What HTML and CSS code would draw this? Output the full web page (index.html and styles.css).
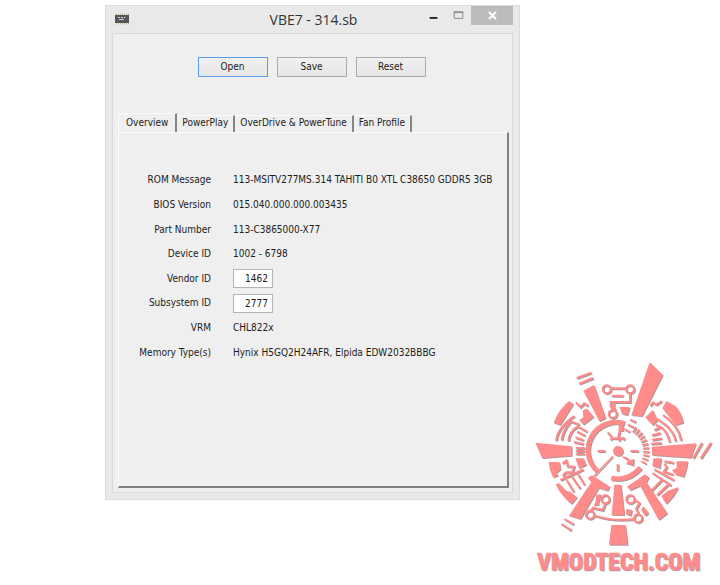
FILE: index.html
```html
<!DOCTYPE html>
<html lang="en">
<head>
<meta charset="utf-8">
<title>VBE7 - 314.sb</title>
<link rel="stylesheet" href="styles.css">
</head>
<body>
<main class="window">
  <header class="titlebar">
    <svg class="app-icon" viewBox="0 0 16 12" aria-hidden="true">
      <path d="M2 1.500H15M2 10.500H15" stroke="#c4bba0" stroke-width="2" stroke-dasharray="1 1"/>
      <rect x="1" y="2" width="14" height="8" fill="#55565a"/>
      <path d="M4 4.500h2m1 0h2m1 0h1.500M5 6.500h5" stroke="#d4d4d4" stroke-width="1"/>
    </svg>
    <h1 class="title">VBE7 - 314.sb</h1>
    <div class="controls">
      <button class="control" aria-label="Minimize"><svg viewBox="0 0 26 20"><path d="M9 12h8" stroke="#222" stroke-width="2"/></svg></button>
      <button class="control" aria-label="Maximize"><svg viewBox="0 0 26 20"><path d="M8.500 5.500h9v7h-9zM8 6.500h10" fill="none" stroke="#8b8b8b"/></svg></button>
      <button class="control close" aria-label="Close"><svg viewBox="0 0 42 20"><path d="M18 6l7 7M25 6l-7 7" stroke="#fff" stroke-width="2"/></svg></button>
    </div>
  </header>
  <div class="client">
    <div class="actions">
      <button class="action primary">Open</button>
      <button class="action">Save</button>
      <button class="action">Reset</button>
    </div>
    <div class="tabs" role="tablist">
      <button class="tab selected" role="tab" aria-selected="true">Overview</button>
      <button class="tab" role="tab">PowerPlay</button>
      <button class="tab" role="tab">OverDrive &amp; PowerTune</button>
      <button class="tab" role="tab">Fan Profile</button>
    </div>
    <section class="pane" role="tabpanel">
      <div class="fields">
        <span class="name">ROM Message</span><span>113-MSITV277MS.314 TAHITI B0 XTL C38650 GDDR5 3GB</span>
        <span class="name">BIOS Version</span><span>015.040.000.000.003435</span>
        <span class="name">Part Number</span><span>113-C3865000-X77</span>
        <span class="name">Device ID</span><span>1002 - 6798</span>
        <label class="name" for="vendor">Vendor ID</label><input class="id-input" id="vendor" value="1462">
        <label class="name" for="subsystem">Subsystem ID</label><input class="id-input" id="subsystem" value="2777">
        <span class="name">VRM</span><span>CHL822x</span>
        <span class="name">Memory Type(s)</span><span>Hynix H5GQ2H24AFR, Elpida EDW2032BBBG</span>
      </div>
    </section>
  </div>
</main>
<aside class="brand">
  <svg class="logo" viewBox="0 0 600 705" role="img" aria-label="VMODTECH.COM">
    <defs>
      <g id="emblem">
        <g class="solid">
          <path d="M389 37L428 74L366 198L334 196Z"/>
          <path d="M190 122L222 105L257 204L238 214Z"/>
          <path d="M46 278L155 289V317L66 324Z"/>
          <path d="M396 290L528 280L512 323L396 315Z"/>
          <path d="M283 404H303L313 495H275Z"/>
          <path d="M274 525H316L323 584H267Z"/>
          <path d="M203 383L216 376L270 410L262 422L236 414L181 507L147 497L214 396Z"/>
          <path d="M321 410L360 383L374 373L387 382L379 397L442 490L416 510L360 407L331 421Z"/>
          <path d="M147 153L160 162L120 225L101 218Q116 178 147 153Z"/>
          <path d="M439 153L466 168Q486 192 490 218L467 225L427 175Z"/>
          <path d="M188 181L201 176L221 200L190 224L178 210L190 202Z"/>
          <path d="M398 180L376 202L398 226L413 211Z"/>
          <path d="M86 336H118L122 358L109 368L114 377L99 382Q88 361 86 336Z"/>
          <path d="M166 325H190L199 345L177 355Z"/>
          <path d="M400 325H424L420 355L397 348Z"/>
          <path d="M470 334H503Q500 359 491 381L468 374L456 361L470 354Z"/>
          <path d="M107 403L117 400L136 421L151 426L171 442L154 462Q123 437 107 403Z"/>
          <path d="M424 439L442 423L475 411Q463 439 438 462Z"/>
          <path d="M298 171H329L322 196L306 192Z"/>
          <path d="M319 476L336 480L333 497L318 493ZM370 469L386 489L376 498L363 480ZM229 434L243 433L239 449L225 464Z"/>
          <path d="M303 318L321 322L330 331L342 326L340 347L317 340L325 334Z"/>
          <circle cx="294" cy="303" r="15"/>
        </g>
        <g class="line">
          <path class="thick" d="M313 220A84 84 0 0 0 231 362"/>
          <path class="thick" d="M274 384Q324 395 361 353"/>
          <path class="thick" d="M303 219V243"/>
          <path d="M300 238L294 263M263 247L278 265H314M277 259L272 270M298 262V274M305 263L314 269"/>
          <path d="M232 303H255M331 303H355M293 342V364"/>
          <path class="thin" d="M222 378L278 319"/>
          <path class="ticks" d="M341 238A78 78 0 0 1 367 344"/>
          <path d="M330 209L347 216M324 224L341 232M313 237L329 246"/>
          <path d="M170 84L214 68M177 101L219 84M124 522L154 541M133 507L161 523M519 325L546 278M542 325L573 278"/>
          <path d="M168 157L181 171L193 160L204 168M425 153L409 164L398 157L391 168"/>
          <path d="M178 224L152 214Q126 244 125 271M163 198Q113 231 108 272M145 273Q149 242 173 229M173 229L201 245M171 245L195 257M166 262L190 270M162 276L190 282"/>
          <path d="M413 207L442 229Q464 254 467 274M429 195Q476 227 483 272M407 225L424 232Q443 249 449 277M403 240L421 232M396 256L421 249M396 269L425 265M393 281L424 279"/>
          <path class="thick" d="M174 291V314M187 291V314" stroke-dasharray="6 3"/>
          <path d="M127 340L139 332L143 349L162 350L157 366L137 367L128 378M121 390L190 358M140 391L161 425M156 381L180 415M174 373L193 404"/>
          <path d="M433 334L461 338M433 341L440 351L431 365L460 374M403 358L461 390M397 369L453 406M425 390L391 425M447 401L411 435M385 380L369 393"/>
          <circle cx="260" cy="118" r="12"/><circle cx="330" cy="118" r="12"/><circle cx="278" cy="192" r="12"/>
          <path d="M272 115H318M330 130V156H272V170L287 179M275 137H310M281 153V178"/>
          <circle cx="256" cy="448" r="12"/><circle cx="210" cy="494" r="12"/><circle cx="331" cy="448" r="12"/><circle cx="354" cy="505" r="12"/>
          <path d="M256 461L248 480L219 473L212 481M222 496Q280 515 342 507M342 448L358 459L348 476L357 493M233 442V461L222 464"/>
        </g>
        <text class="wordmark" x="296" y="661" text-anchor="middle">VMODTECH.COM</text>
      </g>
    </defs>
    <use class="shade" href="#emblem" x="3" y="3"/>
    <use class="face" href="#emblem"/>
  </svg>
</aside>
</body>
</html>
```
FILE: styles.css
```css
* { box-sizing: border-box; }
body {
  margin: 0;
  min-height: 100vh;
  padding: 5px 0 0 105px;
  display: flex;
  align-items: flex-start;
  background: #fff;
  color: #1c1c1c;
  font: 10px/16px "DejaVu Sans Condensed", "Open Sans", sans-serif;
}
button, input { font: inherit; color: inherit; }
.window {
  flex: 1;
  min-width: 0;
  padding: 0 6px 6px;
  border: 1px solid #dcdcdc;
  background: #e9e9e9;
}
.titlebar {
  display: grid;
  grid-template-columns: 94px 1fr 92px;
  align-items: start;
  height: 27px;
}
.app-icon { width: 16px; height: 12px; margin: 7px 0 0 2px; }
.title {
  margin: 0;
  font: 400 14px/28px "Open Sans", "Noto Sans", sans-serif;
  text-align: center;
  color: #333;
}
.controls { display: flex; }
.control {
  width: 25px;
  height: 19px;
  padding: 0;
  border: 0;
  background: none;
}
.control svg { display: block; width: 100%; height: 20px; }
.close { width: 42px; background: #bcbcbc; }
.client {
  padding: 23px 3px 4px 5px;
  border: 1px solid #d9d9d9;
  background: #efefef;
}
.actions { display: flex; justify-content: center; gap: 9px; padding-right: 4px; }
.action {
  width: 70px;
  height: 20px;
  padding: 0;
  border: 1px solid #acacac;
  background: linear-gradient(#f1f1f1, #e6e6e6);
  line-height: 18px;
}
.primary { border-color: #569de5; }
.tabs { display: flex; align-items: flex-end; height: 55px; }
.tab {
  height: 17px;
  padding: 0 5px 2px;
  border: 0;
  border-top: 1px solid #fafafa;
  border-right: 2px solid #858585;
  background: #efefef;
  line-height: 14px;
  white-space: nowrap;
}
.selected { height: 19px; padding: 0 7px; border-left: 1px solid #fafafa; line-height: 18px; }
.pane {
  padding: 35px 0 121px 18px;
  border: solid #fafafa;
  border-width: 1px 2px 2px 1px;
  border-right-color: #808080;
  border-bottom-color: #808080;
}
.fields {
  display: grid;
  grid-template-columns: 74px 1fr;
  grid-template-rows: repeat(8, 1fr);
  column-gap: 22px;
  align-items: center;
  height: 197px;
  white-space: nowrap;
}
.name { text-align: right; }
.id-input {
  width: 40px;
  height: 19px;
  padding: 0 4px;
  border: 1px solid #b4b4b4;
  border-radius: 0;
  background: #fff;
  text-align: right;
}
.brand { flex: none; align-self: flex-end; width: 200px; }
.logo { display: block; width: 100%; }
.shade { color: #b79595; }
.face { color: #ff8b8b; }
.solid { fill: currentColor; }
.line { fill: none; stroke: currentColor; stroke-width: 6; }
.thick { stroke-width: 14; }
.thin { stroke-width: 4; }
.ticks { stroke-width: 18; stroke-dasharray: 5 6; }
.wordmark {
  fill: currentColor;
  stroke: currentColor;
  stroke-width: 2;
  font: 700 71px "Roboto Condensed", "Open Sans Condensed", Roboto, sans-serif;
}
```
